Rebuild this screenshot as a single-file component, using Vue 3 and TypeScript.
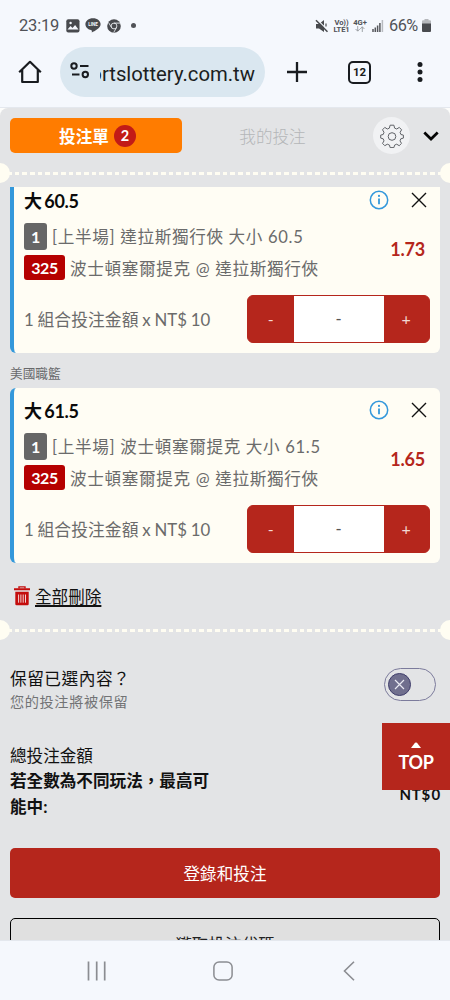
<script setup lang="ts">
interface Bet {
  id: number
  title: string
  market: string
  match: string
  odds: string
}

const bets: Bet[] = [
  { id: 1, title: '大 60.5', market: '[上半場] 達拉斯獨行俠 大小 60.5', match: '波士頓塞爾提克 @ 達拉斯獨行俠', odds: '1.73' },
  { id: 2, title: '大 61.5', market: '[上半場] 波士頓塞爾提克 大小 61.5', match: '波士頓塞爾提克 @ 達拉斯獨行俠', odds: '1.65' },
]
</script>

<template>
  <div class="phone">
    <header class="status">
      <span class="clock">23:19</span>
      <svg class="s-pic" width="14" height="14" viewBox="0 0 14 14">
        <rect x="0.3" y="0.3" width="13.2" height="13.2" rx="2" fill="#484a4e" />
        <path d="M1.5 10.5l3-3.6 2 2 2.6-3 3.4 4.6z" fill="#f5f8fd" />
        <circle cx="4.6" cy="4" r="1.2" fill="#f5f8fd" />
      </svg>
      <svg class="s-line" width="16" height="15" viewBox="0 0 16 15">
        <path d="M8 .3C3.6.3.4 3 .4 6.3c0 3 2.5 5.300 6 5.900.6.2.5 1.300.4 2.200 2.800-1.200 8.800-4.200 8.800-8.100C15.600 3 12.400.3 8 .3z" fill="#484a4e" />
        <text x="8" y="8.300" text-anchor="middle" font-size="4.600" font-weight="700" fill="#f5f8fd">LINE</text>
      </svg>
      <svg class="s-chrome" width="14" height="14" viewBox="0 0 14 14">
        <circle cx="7" cy="7" r="6.800" fill="#484a4e" />
        <circle cx="7" cy="7" r="2.900" fill="none" stroke="#e8ebef" stroke-width="0.900" />
        <path d="M7 4.100h6M4.500 8.500L1.500 3.500M9.500 8.500L6.700 13.500" stroke="#e8ebef" stroke-width="0.900" />
      </svg>
      <i class="s-dot"></i>
      <span class="grow"></span>
      <svg class="s-mute" width="14" height="14" viewBox="0 0 14 14">
        <path d="M1 5h3l5-4v12L4 9.500H1z" fill="#484a4e" />
        <path d="M1.500 0l12 12" stroke="#f5f8fd" stroke-width="1.200" />
        <path d="M1 1.200l11.500 11.500" stroke="#484a4e" stroke-width="1.500" />
        <path d="M11 4.500v3" stroke="#484a4e" stroke-width="1.200" />
      </svg>
      <span class="net net-a"><b>Vo))</b><b>LTE1</b></span>
      <span class="net net-b"><b>4G+</b>
        <svg width="10" height="6" viewBox="0 0 10 6"><path d="M2.700 0v5M.6 3l2.100 2.200L4.800 3M7.300 6V.8M5.200 3L7.300.8 9.400 3" fill="none" stroke="#8c8f94" stroke-width="0.800" /></svg>
      </span>
      <svg class="s-sig" width="12" height="12" viewBox="0 0 12 12">
        <path d="M1 9v3M3.300 7.500V12M5.600 5.500V12M7.900 3V12" stroke="#54565a" stroke-width="1.500" />
        <path d="M10.400 0v12" stroke="#b8bbc0" stroke-width="1.500" />
      </svg>
      <span class="percent">66%</span>
      <svg class="s-bat" width="9" height="13" viewBox="0 0 9 13">
        <path d="M2.500 0h4v1.200H8q1 0 1 1V5H0V2.200q0-1 1-1h1.500z" fill="#b6b8bc" />
        <path d="M0 4.600h9V12q0 1-1 1H1q-1 0-1-1z" fill="#484a4e" />
      </svg>
    </header>

    <nav class="browser">
      <svg class="home" width="24" height="24" viewBox="0 0 24 24">
        <path d="M1.200 12.200L12 1.800l10.800 10.400M4.200 10v12h15.600V10" fill="none" stroke="#191c20" stroke-width="2.200" stroke-linejoin="round" />
      </svg>
      <div class="pill">
        <svg class="tune" width="20" height="17" viewBox="0 0 20 17">
          <g fill="none" stroke="#191c20" stroke-width="2">
            <circle cx="4" cy="4" r="2.700" /><path d="M10 4h8.500M2 12.500h7.500" /><circle cx="15.300" cy="12.500" r="2.700" />
          </g>
        </svg>
        <span class="url"><span class="url-text">ortslottery.com.tw</span></span>
      </div>
      <svg class="plus" width="20" height="20" viewBox="0 0 20 20"><path d="M10 0v20M0 10h20" stroke="#191c20" stroke-width="2.300" /></svg>
      <span class="tabcount">12</span>
      <svg class="kebab" width="6" height="20" viewBox="0 0 6 20"><g fill="#191c20"><circle cx="3" cy="2.500" r="2.500" /><circle cx="3" cy="10" r="2.500" /><circle cx="3" cy="17.500" r="2.500" /></g></svg>
    </nav>

    <main class="page">
      <div class="slip">
        <div class="tabs">
          <button class="tab active">投注單<span class="badge">2</span></button>
          <span class="tab idle">我的投注</span>
          <span class="gear">
            <svg width="24" height="24" viewBox="0 0 24 24">
              <path d="M10.100 1.200h3.800l.7 2.900 2.100.9 2.600-1.600 2.300 2.400-1.500 2.500.8 2.200 2.500.6v3l-2.600.7-.8 2.100 1.500 2.500-2.300 2.300-2.500-1.500-2.100.9-.7 2.500h-3.800l-.6-2.500-2.200-.9-2.500 1.500-2.300-2.300L4 16.900l-.8-2.100L.7 14.100v-3l2.500-.6.8-2.200-1.500-2.500 2.300-2.400 2.500 1.600L9.400 4.100z" fill="none" stroke="#606368" stroke-width="1" stroke-linejoin="round" />
              <circle cx="12" cy="12.500" r="3.800" fill="none" stroke="#606368" />
            </svg>
          </span>
          <svg class="chev" width="16" height="10" viewBox="0 0 16 10"><path d="M1.300 1.500L8 8l6.700-6.500" fill="none" stroke="#050505" stroke-width="2.700" /></svg>
        </div>

        <div class="divider"></div>

        <div class="bets">
          <template v-for="(bet, i) in bets" :key="bet.id">
            <p v-if="i > 0" class="league">美國職籃</p>
            <article class="card">
              <div class="head">
                <strong class="title">{{ bet.title }}</strong>
                <svg class="info" width="20" height="20" viewBox="0 0 20 20">
                  <circle cx="10" cy="10" r="8.700" fill="none" stroke="#3498db" stroke-width="1.500" />
                  <path d="M10 8.500v5.800" stroke="#3498db" stroke-width="1.800" /><circle cx="10" cy="5.900" r="1.050" fill="#3498db" />
                </svg>
                <svg class="close" width="16" height="16" viewBox="0 0 16 16"><path d="M1 1l14 14M15 1L1 15" stroke="#111" stroke-width="1.400" /></svg>
              </div>
              <div class="detail">
                <div class="lines">
                  <div class="line first"><span class="chip grey">1</span><span>{{ bet.market }}</span></div>
                  <div class="line"><span class="chip red">325</span><span>{{ bet.match }}</span></div>
                </div>
                <strong class="odds">{{ bet.odds }}</strong>
              </div>
              <div class="stake">
                <span class="label">1 組合投注金額 x NT$ 10</span>
                <div class="stepper">
                  <button class="step">-</button>
                  <span class="amount">-</span>
                  <button class="step">+</button>
                </div>
              </div>
            </article>
          </template>
        </div>

        <div class="remove">
          <svg width="16" height="20" viewBox="0 0 16 20">
            <path d="M5 2.500V.9h6v1.600" fill="none" stroke="#c40d0d" stroke-width="1.400" />
            <path d="M0 2.300h16v2H0zM1.300 5.800h13.400V18q0 1.300-1.300 1.300H2.600Q1.300 19.300 1.300 18z" fill="#c40d0d" />
            <path d="M4.600 8.500v8.200M6.900 8.500v8.200M9.200 8.500v8.200M11.500 8.500v8.200" stroke="#f0d4d4" stroke-width="1" />
          </svg>
          <a class="remove-link">全部刪除</a>
        </div>

        <div class="divider"></div>

        <section class="keep">
          <div>
            <p class="keep-title">保留已選內容？</p>
            <p class="keep-sub">您的投注將被保留</p>
          </div>
          <span class="toggle"><span class="knob">
            <svg width="11" height="11" viewBox="0 0 11 11"><path d="M1 1l9 9M10 1l-9 9" stroke="#e9e9f2" stroke-width="1.200" /></svg>
          </span></span>
        </section>

        <section class="totals">
          <p class="sum">總投注金額</p>
          <div class="win"><strong class="win-label">若全數為不同玩法，最高可能中:</strong><strong class="win-value">NT$ 0</strong></div>
        </section>

        <button class="primary">登錄和投注</button>
        <button class="secondary">獲取投注代碼</button>
      </div>
      <a class="top"><svg width="10" height="6" viewBox="0 0 10 6"><path d="M0 6L4 .8Q5 0 6 .8L10 6z" fill="#fff" /></svg><span>TOP</span></a>
    </main>

    <footer class="softkeys">
      <svg class="recent" width="20" height="20" viewBox="0 0 20 20"><path d="M1.500 .5v19M9.700 .5v19M17.700 .5v19" stroke="#8b8d92" stroke-width="1.700" /></svg>
      <svg class="homekey" width="20" height="20" viewBox="0 0 20 20"><rect x=".9" y=".9" width="18.200" height="18.200" rx="5.200" fill="none" stroke="#8b8d92" stroke-width="1.500" /></svg>
      <svg class="back" width="12" height="20" viewBox="0 0 12 20"><path d="M11 .7L1.500 10l9.500 9.300" fill="none" stroke="#8b8d92" stroke-width="1.600" /></svg>
    </footer>
  </div>
</template>

<style>
html, body { margin: 0; background: #f5f8fd; overflow: hidden; }
</style>

<style scoped>
* { box-sizing: border-box; }
p { margin: 0; }
button { border: 0; padding: 0; margin: 0; font: inherit; }
svg { flex: none; display: block; }
.phone {
  width: 450px; height: 1000px; overflow: hidden; background: #f5f8fd;
  display: flex; flex-direction: column;
  font-family: Lato, "Noto Sans CJK TC", sans-serif; font-size: 16.600px; color: #111;
}
.status { height: 47px; flex: none; display: flex; align-items: center; padding: 4px 20px 0 19px; font-family: Roboto, sans-serif; color: #505257; }
.clock { font-size: 16.500px; width: 47px; letter-spacing: -0.200px; }
.s-line { margin-left: 5px; font-family: Roboto, sans-serif; }
.s-chrome { margin-left: 6px; }
.s-dot { width: 5px; height: 5px; border-radius: 50%; background: #505257; margin-left: 10px; }
.grow { flex: 1; }
.net { display: flex; flex-direction: column; align-items: center; font-size: 7.600px; line-height: 7px; height: 14px; letter-spacing: -.1px; }
.net b { white-space: nowrap; font-weight: 700; }
.net-a { width: 17px; margin-left: 4px; }
.net-b { width: 14px; margin-left: 3px; }
.s-sig { margin-left: 5px; }
.percent { font-size: 16.300px; width: 31px; margin-left: 5px; letter-spacing: -.5px; white-space: nowrap; }
.s-bat { margin-left: 2px; margin-right: -1px; }

.browser { height: 60px; flex: none; display: flex; align-items: center; padding: 0 27px 10px 18px; }
.pill { width: 205px; height: 50px; border-radius: 25px; background: #dae7f0; margin-left: 18px; display: flex; align-items: center; padding-left: 10px; }
.tune { margin-top: -4px; }
.url { margin-left: 10px; margin-top: 3px; width: 155px; overflow: hidden; display: flex; justify-content: flex-end; }
.url-text { font-family: Roboto, sans-serif; font-size: 20.300px; line-height: 28px; color: #1b1e22; white-space: nowrap; }
.plus { margin-left: 22px; }
.tabcount { width: 23px; height: 23px; margin-left: 41px; border: 2px solid #191c20; border-radius: 5px; font: 700 11.500px/19px Roboto, sans-serif; text-align: center; color: #191c20; }
.kebab { margin-left: 46px; }

.page { height: 833px; flex: none; background: #fdfdfb; position: relative; overflow: hidden; border-top: 1px solid #e4e8ee; }
.slip { height: 832px; background: #e3e4e6; border-radius: 8px 8px 0 0; overflow: hidden; display: flex; flex-direction: column; }
.tabs { height: 55px; flex: none; display: flex; align-items: center; padding: 0 11px 0 10px; }
.tab { height: 35px; display: flex; align-items: center; justify-content: center; }
.active { width: 172px; padding-left: 3px; background: #ff7c00; color: #fff; font-weight: 700; border-radius: 5px; }
.badge { width: 22px; height: 22px; border-radius: 50%; background: #c21b17; font-size: 14.500px; line-height: 22px; margin-left: 5px; }
.idle { width: 181px; color: #b4b6b8; font-weight: 300; }
.gear { width: 37px; height: 37px; margin-left: 10px; border-radius: 50%; background: #f1f2f4; display: flex; align-items: center; justify-content: center; }
.chev { margin-left: 13px; }
.divider {
  height: 20px; flex: none; display: flex; align-items: center; justify-content: space-between;
  background: repeating-linear-gradient(90deg, #fffdf2 0 4.700px, transparent 4.700px 7.700px) 7px 9px / 100% 3px no-repeat;
}
.divider::before, .divider::after { content: ""; width: 20px; height: 20px; border-radius: 50%; background: #fffdf2; flex: none; margin-left: -10px; }
.divider::after { margin: 0 -10px 0 0; }

.bets { height: 381px; flex: none; margin-top: 4px; overflow: hidden; padding: 0 10px 5px; display: flex; flex-direction: column; justify-content: flex-end; }
.card { height: 175px; flex: none; border-left: 4px solid #3498db; border-radius: 6px; background: #fffdf4; padding: 0 10px; }
.league { height: 35px; flex: none; font-size: 12.700px; line-height: 41px; color: #68696c; }
.head { height: 45px; display: flex; align-items: center; }
.title { flex: 1; font-size: 18px; letter-spacing: -.3px; color: #0a0a0a; word-spacing: -1.500px; margin-top: -1px; }
.info { margin-right: 22px; margin-top: -1px; }
.close { margin-right: 3px; margin-top: -1px; }
.detail { height: 57px; display: flex; align-items: center; justify-content: space-between; color: #6b6b6b; }
.lines { display: flex; flex-direction: column; gap: 5px; }
.line { height: 25px; display: flex; align-items: center; gap: 5px; letter-spacing: .660px; white-space: nowrap; font-weight: 400; }
.line.first { height: 27px; }
.line.first span:last-child { margin-top: -2px; }
.chip { color: #fff; font-weight: 700; font-size: 16px; border-radius: 3px; text-align: center; letter-spacing: -.4px; }
.grey { width: 23px; height: 27px; line-height: 28px; background: #666; }
.red { width: 41px; height: 25px; line-height: 26px; background: #b50000; }
.odds { font-size: 18px; letter-spacing: -.2px; color: #b5261c; margin-right: 5px; margin-top: -5px; }
.stake { margin-top: 15px; height: 48px; display: flex; align-items: center; justify-content: space-between; color: #6b6b6b; }
.label { white-space: nowrap; font-size: 16.800px; word-spacing: -.6px; letter-spacing: .05px; margin-top: -1px; }
.stepper { width: 183px; height: 48px; border: 1px solid #b5261c; background: #b5261c; border-radius: 6px; display: flex; overflow: hidden; }
.step { width: 45.500px; background: none; color: #f3d9d5; font-size: 16px; padding-bottom: 2px; }
.amount { flex: 1; background: #fff; color: #555; text-align: center; line-height: 46px; }

.remove { height: 47px; flex: none; display: flex; align-items: center; padding: 0 14px; gap: 5px; margin-top: 5px; }
.remove-link { line-height: 24px; text-decoration: underline; text-underline-offset: 2px; text-decoration-thickness: 1.500px; margin-top: 1px; }
.remove svg { margin-top: -2px; }
.keep { height: 55px; flex: none; margin-top: 20px; padding: 0 14px 0 10px; display: flex; justify-content: space-between; align-items: flex-start; }
.keep-title { font-size: 16.700px; letter-spacing: .5px; line-height: 26px; margin-top: 6px; }
.keep-sub { font-size: 14.200px; letter-spacing: .6px; line-height: 20px; color: #727375; font-weight: 400; }
.toggle { width: 52px; height: 33px; margin-top: 8px; border: 1.500px solid #7c7b9c; border-radius: 17px; display: flex; align-items: center; padding-left: 3px; }
.knob { width: 23px; height: 23px; border-radius: 50%; background: #706f8e; border: 1.500px solid #3f3d6b; display: flex; align-items: center; justify-content: center; }
.totals { flex: none; height: 133px; padding: 29px 10px 0; }
.sum { line-height: 25px; }
.win { display: flex; justify-content: space-between; }
.win-label { width: 205px; line-height: 25.500px; }
.win-value { line-height: 25px; margin-top: 13px; letter-spacing: .8px; font-size: 15px; word-spacing: -4px; margin-right: -1px; }
.primary { height: 50px; flex: none; margin: 0 10px; background: #b5261c; color: #fff; border-radius: 5px; }
.secondary { height: 50px; flex: none; margin: 20px 10px 0; background: #e0e0e0; color: #222; border: 1px solid #000; border-radius: 5px; padding-top: 2px; }
.top { position: absolute; right: 0; top: 615px; width: 68px; height: 67px; background: #b5261c; color: #fff; display: flex; flex-direction: column; align-items: center; padding-top: 19px; font-weight: 700; font-size: 18px; letter-spacing: -.3px; line-height: 24px; }
.top span { margin-top: 2px; }
.softkeys { flex: 1; display: flex; align-items: center; padding: 0 0 0 87px; border-top: 1px solid #e4e8ee; }
.homekey { margin-left: 106px; }
.back { margin-left: 110px; }
</style>
